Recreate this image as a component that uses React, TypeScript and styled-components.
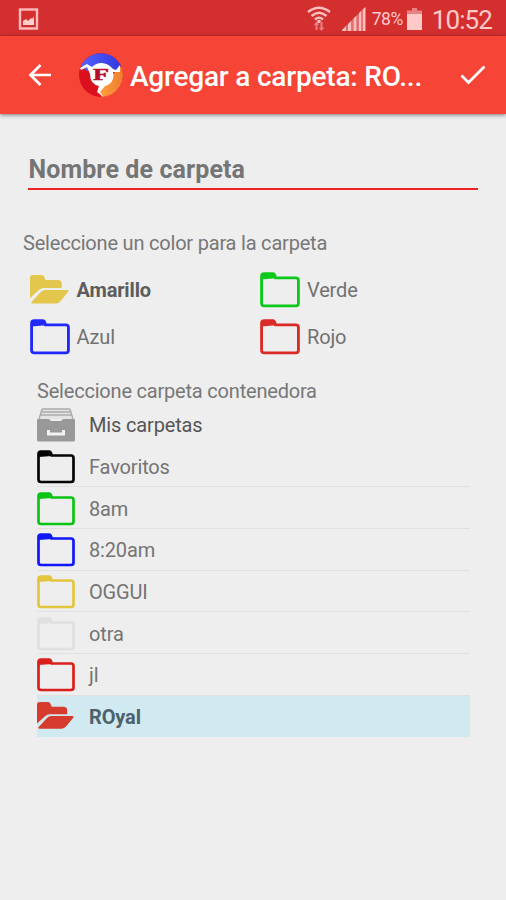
import React from 'react';
import styled, { createGlobalStyle } from 'styled-components';

const GlobalStyle = createGlobalStyle`
  * { box-sizing: border-box; }
  body { margin: 0; background: #eeeeee; font-family: Roboto, "Liberation Sans", sans-serif; overflow: hidden; }
  svg { display: block; flex: none; }
`;

const Screen = styled.div`
  width: 506px;
  height: 900px;
  background: #eeeeee;
  display: flex;
  flex-direction: column;
`;

const StatusBar = styled.header`
  height: 36px;
  flex: none;
  background: #d32f2f;
  border-bottom: 1px solid #c8302c;
  color: #ffc9c9;
  display: flex;
  align-items: center;
  padding: 2px 14px 0 18px;
`;

const StatusIcons = styled.div`
  margin-left: auto;
  display: flex;
  align-items: center;
`;

const Spacer = styled.span`
  width: 11px;
`;

const Battery = styled.span`
  font-size: 17.5px;
  letter-spacing: -0.5px;
  margin: 1px 4px 0 6px;
`;

const Clock = styled.span`
  font-size: 26px;
  line-height: 34px;
  letter-spacing: -0.9px;
  margin-left: 10px;
  margin-top: 2px;
`;

const AppBar = styled.div`
  height: 78px;
  flex: none;
  background: #f64436;
  box-shadow: 0 1px 4px rgba(0, 0, 0, 0.5);
  display: flex;
  align-items: center;
  padding: 0 20px 0 28px;
`;

const IconButton = styled.button`
  border: 0;
  padding: 0;
  background: none;
  color: #fff;
`;

const Logo = styled.div`
  margin: 0 7px 0 27px;
`;

const Title = styled.h1`
  margin: 0;
  padding-top: 3px;
  flex: 1;
  font-size: 28px;
  line-height: 36px;
  font-weight: 500;
  color: #fff;
  white-space: nowrap;
  letter-spacing: -0.2px;
`;

const Form = styled.main`
  display: flex;
  flex-direction: column;
`;

const NameField = styled.div`
  margin: 36px 28px 0;
  height: 40px;
  padding-left: 0.5px;
  border-bottom: 2px solid #ee2424;
  font-size: 25px;
  line-height: 39px;
  font-weight: 700;
  color: #757575;
  letter-spacing: 0.1px;
`;

const Label = styled.div<{ $left: number; $top: number }>`
  margin: ${(p) => p.$top}px 0 0 ${(p) => p.$left}px;
  font-size: 20px;
  line-height: 26px;
  letter-spacing: -0.2px;
  color: #777;
`;

const Colors = styled.div`
  margin: 10.5px 0 0 29.5px;
  display: grid;
  grid-template-columns: 230.5px 1fr;
  grid-template-rows: 47px 46px;
`;

const ColorOption = styled.div<{ $selected?: boolean }>`
  display: flex;
  align-items: center;
  gap: 7px;
  font-size: 20px;
  letter-spacing: -0.15px;
  font-weight: ${(p) => (p.$selected ? 700 : 400)};
  color: ${(p) => (p.$selected ? '#5c5c5c' : '#717171')};
`;

const List = styled.div`
  margin: 0 36px 0 37px;
  display: flex;
  flex-direction: column;
`;

const Row = styled.div<{ $selected?: boolean; $root?: boolean; $line?: boolean }>`
  height: 41.67px;
  display: flex;
  align-items: center;
  gap: 14px;
  font-size: 20px;
  letter-spacing: -0.15px;
  font-weight: ${(p) => (p.$selected ? 700 : 400)};
  color: ${(p) => (p.$selected ? '#4c626b' : p.$root ? '#555' : '#747474')};
  background: ${(p) => (p.$selected ? '#d1e9f1' : 'transparent')};
  border-bottom: 1px solid ${(p) => (p.$line ? '#e0e0e0' : 'transparent')};
  background-clip: border-box;

  > svg {
    margin-top: ${(p) => (p.$selected ? 0 : 2)}px;
  }
`;

const RowText = styled.span`
  padding-top: 2px;
`;

const Closed = ({ color, w = 38 }: { color: string; w?: number }) => (
  <svg width={w} height={w === 38 ? 34 : 36} viewBox="0 0 38 34" preserveAspectRatio="none">
    <path d="M1.500 8V4Q1.500 1.500 4 1.500H12Q14 1.500 14.700 5.500H34Q36.500 5.500 36.500 8V29.500Q36.500 32 34 32H4Q1.500 32 1.500 29.500Z" fill="none" stroke={color} strokeWidth="2.700" />
    <path d="M1.500 7V4Q1.500 1.500 4 1.500H12Q14 1.500 15 6Z" fill={color} />
  </svg>
);

const Open = ({ color, w = 38 }: { color: string; w?: number }) => (
  <svg width={w} height={w === 38 ? 30 : 32} viewBox="0 0 39 32" preserveAspectRatio="none">
    <path d="M0 24V4Q0 1 3 1H11Q14 1 15 6H27Q31 6 31 10V14H13Q10.500 14 8 16.500Z" fill={color} />
    <path d="M1.500 28L10 18.500Q12 16 15 16H36.500Q38.500 16 37 18L30 27Q28 29.500 25 29.500H3Q.5 29.500 1.500 28Z" fill={color} />
  </svg>
);

const Drawer = () => (
  <svg width="38" height="34" viewBox="0 0 38 34">
    <path d="M5 1H33L36 11H2Z" fill="#e4e4e4" />
    <path d="M5 1H33M4 4H34M3 7H35M5 1L2 11M33 1L36 11" stroke="#aaa" strokeWidth="1.3" fill="none" />
    <path d="M0 12Q0 11 1 11H12L14 13H24L26 11H37Q38 11 38 12V32Q38 33.500 36.500 33.500H1.500Q0 33.500 0 32Z" fill="#999" />
    <path d="M11.500 22V26H26.500V22" fill="none" stroke="#f1f1f1" strokeWidth="3" />
  </svg>
);

const PictureIcon = () => (
  <svg width="21" height="22" viewBox="0 0 21 22">
    <rect x="2" y="1.500" width="17" height="19" fill="none" stroke="#ffbcbc" strokeWidth="2.400" />
    <path d="M5 17V13L8 11L10 13L13 10L14 11L16 8.500V17Z" fill="#ffd0d0" />
  </svg>
);

const WifiIcon = () => (
  <svg width="24" height="26" viewBox="0 0 24 26" fill="none" stroke="#ffc0c0">
    <path d="M1 6Q12-2.500 23 6M4.500 10Q12 3.500 19.500 10M8 13.500Q12 10 16 13.500" strokeWidth="2.400" />
    <circle cx="12" cy="15.500" r="1.800" fill="#ffc0c0" stroke="none" />
    <path d="M9.500 24V17M14.500 16V23" stroke="#e98282" strokeWidth="2" />
    <path d="M7.500 19L9.500 16.500L11.500 19M12.500 21.500L14.500 24L16.500 21.500" stroke="#e98282" strokeWidth="1.300" />
  </svg>
);

const SignalIcon = () => (
  <svg width="24" height="24" viewBox="0 0 24 24" fill="#ffc0c0">
    <path d="M0 24V23L4 19V24ZM6 24V17L9.500 13.500V24Z" />
    <path d="M4 24V19L6 17V24ZM9.500 24V13.500L11.500 11.500V24ZM14.500 24V8.500L17 6V24Z" fill="#e07070" />
    <path d="M11.500 24V11.500L14.500 8.500V24ZM17 24V6L19.500 3.500V24ZM20.500 24V2.500L23.500 0V24Z" />
  </svg>
);

const BatteryIcon = () => (
  <svg width="15" height="22" viewBox="0 0 15 22">
    <path d="M5 0H10V3H5Z" fill="#e98282" />
    <path d="M0 2.500H15V6H0Z" fill="#e98282" />
    <path d="M0 6H15V22H0Z" fill="#ffc9c9" />
  </svg>
);

const BackIcon = () => (
  <svg width="24" height="24" viewBox="0 0 24 24" fill="none" stroke="#fff" strokeWidth="2.700">
    <path d="M23 12H3M12.500 2L2.500 12L12.500 22" />
  </svg>
);

const AppLogo = () => (
  <svg width="44" height="46" viewBox="0 0 44 46">
    <defs>
      <linearGradient id="blue" x2="1"><stop stopColor="#5262ff" /><stop offset="1" stopColor="#3437dc" /></linearGradient>
      <linearGradient id="orange" x2="1"><stop stopColor="#ffa13b" /><stop offset="1" stopColor="#ee7d32" /></linearGradient>
    </defs>
    <circle cx="22" cy="23" r="22" fill="#db101f" />
    <path d="M2 14A22 22 0 0 1 42 14L38 21L30 15H14L8 19Z" fill="url(#blue)" />
    <path d="M42 14A22 22 0 0 1 23 45L20 40L23 33L36 20Z" fill="url(#orange)" />
    <path d="M1 16L8 12L13 15Q17 11 22.500 11Q29 11 34 17L37 18L41 13V20L34 20Q36 31 26 34L21 40L24.500 45L18 40L20 34Q11 32 11 22L8 15L2 18Z" fill="#fff" />
    <text x="22" y="28" textAnchor="middle" fontFamily="Liberation Serif, serif" fontSize="16" fontWeight="700" fill="#b70d26" stroke="#b70d26" strokeWidth=".5" textLength="16" lengthAdjust="spacingAndGlyphs">F</text>
  </svg>
);

const CheckIcon = () => (
  <svg width="26" height="20" viewBox="0 0 26 20" fill="none" stroke="#fff" strokeWidth="2.700">
    <path d="M1.500 10.500L8.500 17.500L24.500 1.500" />
  </svg>
);

const folders = [
  { name: 'Favoritos', color: '#050505' },
  { name: '8am', color: '#0bc414' },
  { name: '8:20am', color: '#1117fa' },
  { name: 'OGGUI', color: '#e3c53e' },
  { name: 'otra', color: '#e0e0e0' },
  { name: 'jl', color: '#d9201d' },
];

export default function App() {
  return (
    <Screen>
      <GlobalStyle />
      <StatusBar>
        <PictureIcon />
        <StatusIcons>
          <WifiIcon />
          <Spacer />
          <SignalIcon />
          <Battery>78%</Battery>
          <BatteryIcon />
          <Clock>10:52</Clock>
        </StatusIcons>
      </StatusBar>
      <AppBar>
        <IconButton aria-label="Volver"><BackIcon /></IconButton>
        <Logo><AppLogo /></Logo>
        <Title>Agregar a carpeta: RO...</Title>
        <IconButton aria-label="Aceptar"><CheckIcon /></IconButton>
      </AppBar>
      <Form>
        <NameField>Nombre de carpeta</NameField>
        <Label $left={23} $top={40}>Seleccione un color para la carpeta</Label>
        <Colors>
          <ColorOption $selected><Open color="#e3c74d" w={40} />Amarillo</ColorOption>
          <ColorOption><Closed color="#0bc81b" w={40} />Verde</ColorOption>
          <ColorOption><Closed color="#2029fa" w={40} />Azul</ColorOption>
          <ColorOption><Closed color="#d92a27" w={40} />Rojo</ColorOption>
        </Colors>
        <Label $left={37} $top={18.5}>Seleccione carpeta contenedora</Label>
        <List>
          <Row $root><Drawer /><RowText>Mis carpetas</RowText></Row>
          {folders.map((f) => (
            <Row key={f.name} $line><Closed color={f.color} /><RowText>{f.name}</RowText></Row>
          ))}
          <Row $selected><Open color="#d63b2e" /><RowText>ROyal</RowText></Row>
        </List>
      </Form>
    </Screen>
  );
}
